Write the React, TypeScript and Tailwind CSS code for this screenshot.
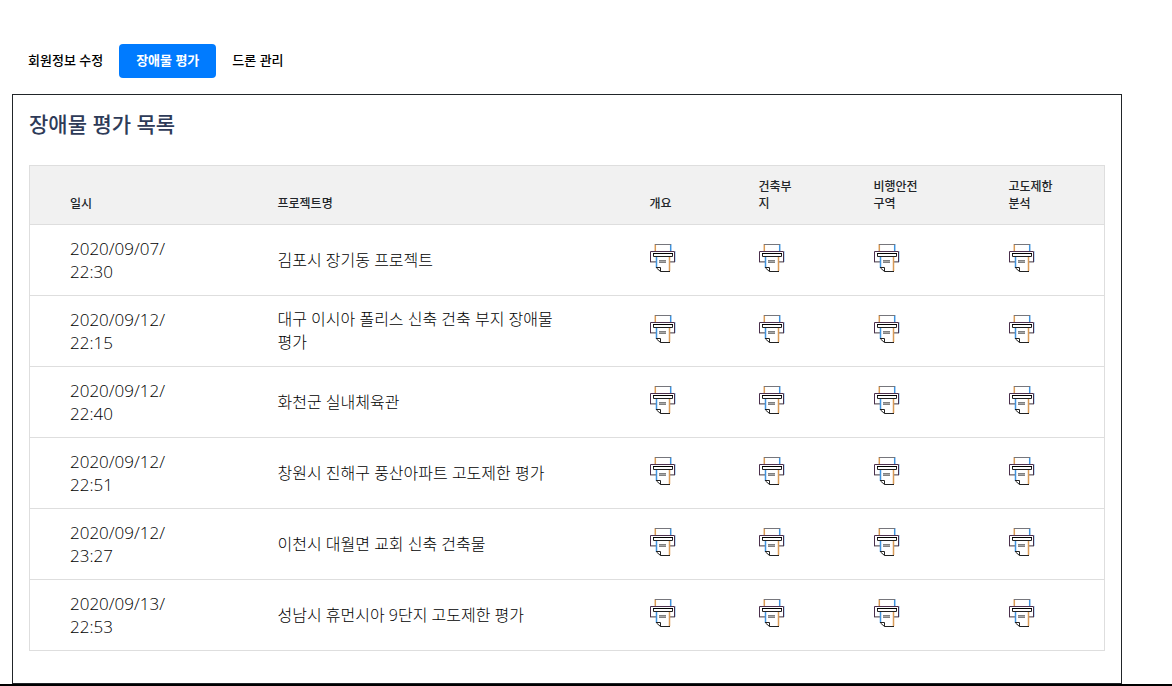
import React from 'react';

interface Assessment {
  date: string;
  time: string;
  name: string;
}

const tabs = ['회원정보 수정', '장애물 평가', '드론 관리'];
const reports = ['개요', '건축부지', '비행안전 구역', '고도제한 분석'];

const assessments: Assessment[] = [
  { date: '2020/09/07/', time: '22:30', name: '김포시 장기동 프로젝트' },
  { date: '2020/09/12/', time: '22:15', name: '대구 이시아 폴리스 신축 건축 부지 장애물 평가' },
  { date: '2020/09/12/', time: '22:40', name: '화천군 실내체육관' },
  { date: '2020/09/12/', time: '22:51', name: '창원시 진해구 풍산아파트 고도제한 평가' },
  { date: '2020/09/12/', time: '23:27', name: '이천시 대월면 교회 신축 건축물' },
  { date: '2020/09/13/', time: '22:53', name: '성남시 휴먼시아 9단지 고도제한 평가' },
];

const PrinterIcon: React.FC = () => (
  <svg width="26" height="29" viewBox="0 0 26 29" fill="none" aria-hidden="true">
    <path d="M5.3 8V0" stroke="#d99a55" strokeWidth="1.5" />
    <path d="M20.7 8V0" stroke="#3f93de" strokeWidth="1.5" />
    <path d="M5 .5h16" stroke="#76767c" />
    <path d="M6 18.5H0M25 18.5h-5" stroke="#b5b0b5" />
    <path d="M6 17.5H0M25 17.5h-5" stroke="#8a858a" />
    <path d="M.5 18V7.5h24V18" stroke="#4b2f4c" />
    <path d="M25.5 18V7" stroke="#b9def7" />
    <path d="M3.5 9.5h19v3h-19z" fill="#fff" stroke="#222" />
    <path d="M3 9.5h20" stroke="#000" />
    <path d="M6.5 13v11.5l4 3h9V13z" fill="#fff" />
    <path d="M6.5 13v11" stroke="#3f93de" strokeWidth="1.5" />
    <path d="M19.5 13v14" stroke="#d99a55" strokeWidth="1.5" />
    <path d="M6 23.5h4.5v4M6.5 24l4 3.5H20" stroke="#222" />
    <path d="M9 16.5h7M9 18.5h7" stroke="#808080" />
    <path d="M9 17.5h7" stroke="#a8a8a8" />
  </svg>
);

const TabNav: React.FC = () => (
  <nav className="flex h-[34px] text-[13px] font-medium text-black">
    {tabs.map((tab) => (
      <a
        key={tab}
        href="#"
        className={
          tab === '장애물 평가'
            ? 'flex items-center rounded bg-[#007bff] px-[17px] font-bold text-white'
            : 'flex items-center px-4'
        }
      >
        {tab}
      </a>
    ))}
  </nav>
);

const AssessmentTable: React.FC = () => (
  <table className="w-full table-fixed border-collapse border border-[#dedede] text-left">
    <colgroup>
      <col className="w-[208px]" />
      <col />
      <col className="w-[109px]" />
      <col className="w-[115px]" />
      <col className="w-[135px]" />
      <col className="w-[136px]" />
    </colgroup>
    <thead className="bg-[#f1f1f1] text-xs leading-[17px]">
      <tr className="border-b border-[#dedede]">
        <th scope="col" className="px-10 py-3 align-bottom font-medium">일시</th>
        <th scope="col" className="px-10 py-3 align-bottom font-medium">프로젝트명</th>
        {reports.map((report) => (
          <th key={report} scope="col" className="px-10 py-3 align-bottom font-medium">
            {report}
          </th>
        ))}
      </tr>
    </thead>
    <tbody className="text-base leading-[23px] font-light text-black">
      {assessments.map((item) => (
        <tr key={`${item.date}${item.time}`} className="border-b border-[#dedede]">
          <td className="px-10 py-3 text-[17px] leading-[23px]">
            {item.date} {item.time}
          </td>
          <td className="px-10 py-3 leading-[23px]">{item.name}</td>
          {reports.map((report) => (
            <td key={report} className="px-10 pt-3 pb-4">
              <button type="button" aria-label={`${item.name} ${report}`} className="block cursor-pointer">
                <PrinterIcon />
              </button>
            </td>
          ))}
        </tr>
      ))}
    </tbody>
  </table>
);

export default function App() {
  return (
    <div className="border-b-2 border-black bg-white pt-11 font-['Open_Sans','Noto_Sans_CJK_KR',sans-serif] text-[#212529]">
      <main className="mr-[50px] ml-3">
        <TabNav />
        <section className="mt-4 border border-[#212529] px-4 pt-[15px] pb-8">
          <h1 className="mb-[27px] text-[21px] leading-7 font-medium text-[#2e3b58]">장애물 평가 목록</h1>
          <AssessmentTable />
        </section>
      </main>
    </div>
  );
}
